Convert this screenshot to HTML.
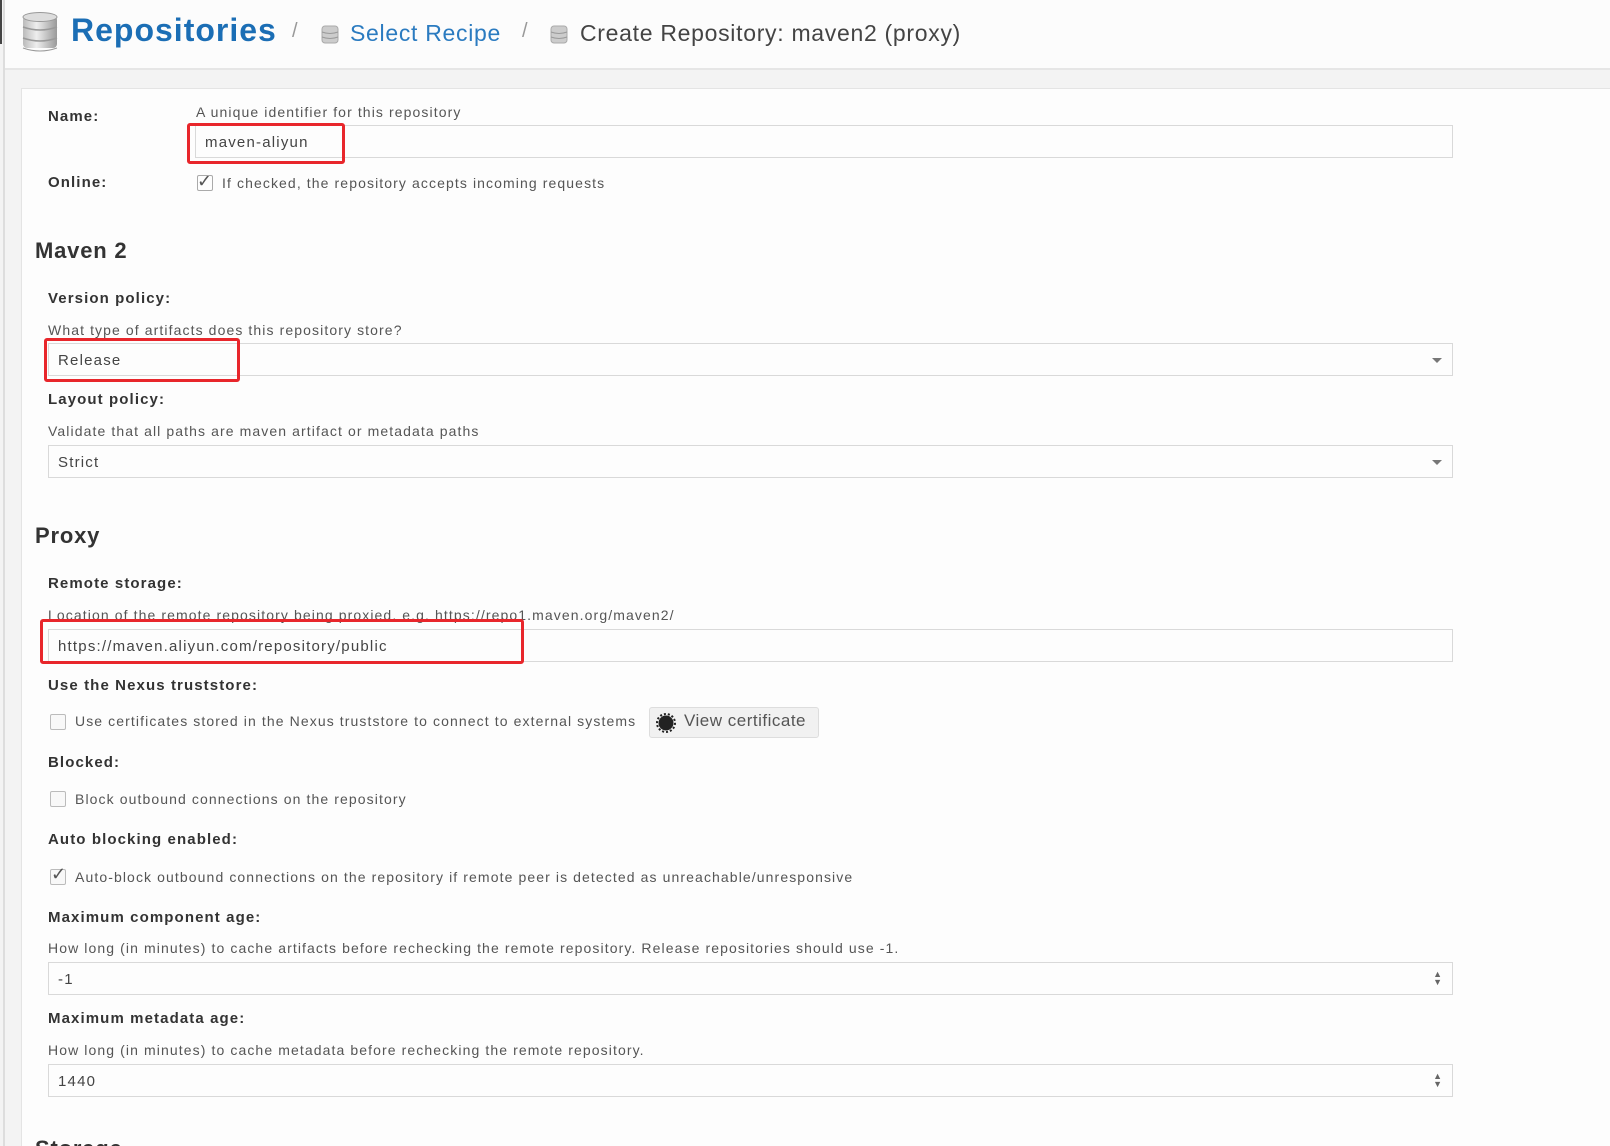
<!DOCTYPE html>
<html style="height:1146px;overflow:hidden"><head><meta charset="utf-8">
<style>
*{margin:0;padding:0;box-sizing:border-box}
body{width:1610px;height:1146px;background:#f3f3f3;font-family:"Liberation Sans",sans-serif;color:#333;position:relative;overflow:hidden}
.a{position:absolute;white-space:nowrap}
.hdr{position:absolute;left:4px;top:0;width:1606px;height:70px;background:#fcfcfc;border-bottom:2px solid #e6e6e6}
.vl{position:absolute;left:3px;top:0;width:2px;height:1146px;background:#ddd}
.vl0{position:absolute;left:0;top:0;width:2px;height:44px;background:#444}
.panel{position:absolute;left:21px;top:88px;width:1589px;height:1058px;background:#fdfdfd;border:1px solid #e4e4e4;border-bottom:none;border-right:none}
.lbl{font-weight:bold;font-size:15px;color:#333;letter-spacing:1.1px}
.help{font-size:14px;color:#555;letter-spacing:1.1px}
.inp{position:absolute;background:#fdfdfd;border:1px solid #d9d9d9;height:33px;font-size:15px;color:#444;padding:8px 9px;letter-spacing:1.2px}
.red{position:absolute;border:3px solid #e8262b;border-radius:3px}
.h2{font-size:22px;font-weight:bold;color:#333;letter-spacing:0.8px}
.cb{position:absolute;width:16px;height:16px;border:1px solid #bbb;border-radius:2px;background:#f8f8f8}
.arr{position:absolute;right:10px;top:14px;width:0;height:0;border-left:5px solid transparent;border-right:5px solid transparent;border-top:5px solid #777}
.spin{position:absolute;right:10px;top:7px;font-size:9px;line-height:8px;color:#666;letter-spacing:0}
</style></head><body>
<div class="hdr"></div>
<div class="vl"></div><div class="vl0"></div>
<svg class="a" style="left:22px;top:12px" width="36" height="40" viewBox="0 0 36 40">
<defs><linearGradient id="g" x1="0" x2="1"><stop offset="0" stop-color="#bbb"/><stop offset=".4" stop-color="#eee"/><stop offset="1" stop-color="#999"/></linearGradient></defs>
<rect x="1" y="4" width="34" height="32" rx="4" fill="url(#g)"/>
<ellipse cx="18" cy="5" rx="17" ry="4.5" fill="#ddd" stroke="#999"/>
<path d="M1 15 Q18 21 35 15 M1 26 Q18 32 35 26" stroke="#999" fill="none" stroke-width="1.5"/>
<path d="M1 36 Q18 42 35 36" stroke="#999" fill="none"/>
</svg>
<div class="a" style="left:71px;top:12px;font-size:32px;font-weight:bold;color:#1b6eb5;letter-spacing:1px">Repositories</div>
<div class="a" style="left:292px;top:20px;font-size:20px;color:#999">/</div>
<svg class="a" style="left:321px;top:24px" width="18" height="21" viewBox="0 0 18 21"><rect x="1" y="2" width="16" height="17" rx="3" fill="#ccc" stroke="#aaa"/><path d="M1 8 Q9 11 17 8 M1 13 Q9 16 17 13" stroke="#999" fill="none"/></svg>
<div class="a" style="left:350px;top:20px;font-size:23px;color:#2b7bc0;letter-spacing:0.7px">Select Recipe</div>
<div class="a" style="left:522px;top:20px;font-size:20px;color:#999">/</div>
<svg class="a" style="left:550px;top:24px" width="18" height="21" viewBox="0 0 18 21"><rect x="1" y="2" width="16" height="17" rx="3" fill="#ccc" stroke="#aaa"/><path d="M1 8 Q9 11 17 8 M1 13 Q9 16 17 13" stroke="#999" fill="none"/></svg>
<div class="a" style="left:580px;top:20px;font-size:23px;color:#444;letter-spacing:0.7px">Create Repository: maven2 (proxy)</div>

<div class="panel"></div>

<div class="a lbl" style="left:48px;top:108px">Name:</div>
<div class="a help" style="left:196px;top:104px">A unique identifier for this repository</div>
<div class="inp" style="left:195px;top:125px;width:1258px">maven-aliyun</div>
<div class="red" style="left:187px;top:123px;width:158px;height:41px"></div>
<div class="a lbl" style="left:48px;top:174px">Online:</div>
<div class="a" style="left:197px;top:171px;font-size:18px;color:#555">&#10003;</div>
<div class="cb" style="left:197px;top:175px;border-color:#aaa;background:transparent"></div>
<div class="a help" style="left:222px;top:175px">If checked, the repository accepts incoming requests</div>

<div class="a h2" style="left:35px;top:238px">Maven 2</div>
<div class="a lbl" style="left:48px;top:290px">Version policy:</div>
<div class="a help" style="left:48px;top:322px">What type of artifacts does this repository store?</div>
<div class="inp" style="left:48px;top:343px;width:1405px">Release<span class="arr"></span></div>
<div class="red" style="left:44px;top:338px;width:196px;height:44px"></div>
<div class="a lbl" style="left:48px;top:391px">Layout policy:</div>
<div class="a help" style="left:48px;top:423px">Validate that all paths are maven artifact or metadata paths</div>
<div class="inp" style="left:48px;top:445px;width:1405px">Strict<span class="arr"></span></div>

<div class="a h2" style="left:35px;top:523px">Proxy</div>
<div class="a lbl" style="left:48px;top:575px">Remote storage:</div>
<div class="a help" style="left:48px;top:607px">Location of the remote repository being proxied, e.g. https://repo1.maven.org/maven2/</div>
<div class="inp" style="left:48px;top:629px;width:1405px">https://maven.aliyun.com/repository/public</div>
<div class="red" style="left:40px;top:619px;width:484px;height:45px"></div>
<div class="a lbl" style="left:48px;top:677px">Use the Nexus truststore:</div>
<div class="cb" style="left:50px;top:714px"></div>
<div class="a help" style="left:75px;top:713px">Use certificates stored in the Nexus truststore to connect to external systems</div>
<div class="a" style="left:649px;top:707px;width:170px;height:31px;border:1px solid #ddd;border-radius:3px;background:#f1f1f1"></div>
<svg class="a" style="left:656px;top:713px" width="20" height="20" viewBox="0 0 20 20"><circle cx="10" cy="10" r="7.5" fill="#222"/><circle cx="10" cy="10" r="9" fill="none" stroke="#222" stroke-width="2" stroke-dasharray="2 2"/></svg>
<div class="a" style="left:684px;top:711px;font-size:17px;color:#555;letter-spacing:0.5px">View certificate</div>
<div class="a lbl" style="left:48px;top:754px">Blocked:</div>
<div class="cb" style="left:50px;top:791px"></div>
<div class="a help" style="left:75px;top:791px">Block outbound connections on the repository</div>
<div class="a lbl" style="left:48px;top:831px">Auto blocking enabled:</div>
<div class="cb" style="left:50px;top:869px"></div>
<div class="a" style="left:51px;top:864px;font-size:18px;color:#555">&#10003;</div>
<div class="a help" style="left:75px;top:869px">Auto-block outbound connections on the repository if remote peer is detected as unreachable/unresponsive</div>
<div class="a lbl" style="left:48px;top:909px">Maximum component age:</div>
<div class="a help" style="left:48px;top:940px">How long (in minutes) to cache artifacts before rechecking the remote repository. Release repositories should use -1.</div>
<div class="inp" style="left:48px;top:962px;width:1405px">-1<span class="spin">&#9650;<br>&#9660;</span></div>
<div class="a lbl" style="left:48px;top:1010px">Maximum metadata age:</div>
<div class="a help" style="left:48px;top:1042px">How long (in minutes) to cache metadata before rechecking the remote repository.</div>
<div class="inp" style="left:48px;top:1064px;width:1405px">1440<span class="spin">&#9650;<br>&#9660;</span></div>
<div class="a h2" style="left:35px;top:1136px">Storage</div>
</body></html>
